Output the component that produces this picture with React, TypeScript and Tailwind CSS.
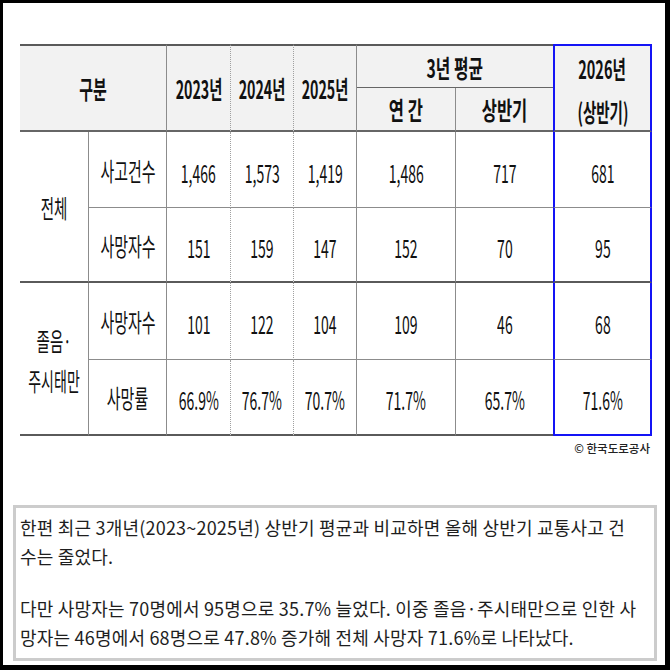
import React from "react";

const FONT = "font-['Noto_Sans_CJK_KR','Noto_Sans',sans-serif]";

function Txt({ children, cls }: { children: React.ReactNode; cls: string }) {
  return <span className={"inline-block whitespace-nowrap " + cls}>{children}</span>;
}

const colStart = ["col-start-3", "col-start-4", "col-start-5", "col-start-6", "col-start-7", "col-start-8"];
const rowStart = ["row-start-3", "row-start-4", "row-start-5", "row-start-6"];
const colRight = [
  "border-r border-r-[#a0a0a0] [border-right-style:dotted]",
  "border-r border-r-[#a0a0a0] [border-right-style:dotted]",
  "border-r border-r-[#8c8c8c]",
  "border-r border-r-[#8c8c8c]",
  "",
  "border-x-2 border-x-[#1414f5]",
];
const rowBottom = [
  "border-b border-b-[#8c8c8c]",
  "border-b-2 border-b-[#5a5a5a]",
  "border-b border-b-[#8c8c8c]",
  "border-b-2 border-b-[#5a5a5a]",
];
const rowBottomBlue = [
  "border-b border-b-[#8c8c8c]",
  "border-b-2 border-b-[#5a5a5a]",
  "border-b border-b-[#8c8c8c]",
  "border-b-2 border-b-[#1414f5]",
];

const labels = ["사고건수", "사망자수", "사망자수", "사망률"];
const data = [
  ["1,466", "1,573", "1,419", "1,486", "717", "681"],
  ["151", "159", "147", "152", "70", "95"],
  ["101", "122", "104", "109", "46", "68"],
  ["66.9%", "76.7%", "70.7%", "71.7%", "65.7%", "71.6%"],
];

const cellBase = "flex items-center justify-center";
const headBg = "bg-[#f2f2f2]";

export default function App() {
  return (
    <div className={"w-[670px] h-[670px] bg-white border-black border-l-[3px] border-t-[3px] border-r-[5px] border-b-[5px] text-[#111] " + FONT}>
      <div className="ml-[17px] mt-[41px] w-[632px]">
        <div className="grid grid-cols-[69px_78px_64px_63px_63px_99px_97px_99px] grid-rows-[44px_44px_76px_75px_77px_76px] text-[25px] leading-[30px]">
          {/* Header */}
          <div className={cellBase + " " + headBg + " col-start-1 col-span-2 row-start-1 row-span-2 border-t-2 border-t-[#5a5a5a] border-b-2 border-b-[#666] border-r border-r-[#8c8c8c] font-bold"}>
            <Txt cls="scale-x-[0.6]">구분</Txt>
          </div>
          <div className={cellBase + " " + headBg + " col-start-3 row-start-1 row-span-2 border-t-2 border-t-[#5a5a5a] border-b-2 border-b-[#666] border-r border-r-[#a0a0a0] [border-right-style:dotted] font-bold"}>
            <Txt cls="scale-x-[0.57]">2023년</Txt>
          </div>
          <div className={cellBase + " " + headBg + " col-start-4 row-start-1 row-span-2 border-t-2 border-t-[#5a5a5a] border-b-2 border-b-[#666] border-r border-r-[#a0a0a0] [border-right-style:dotted] font-bold"}>
            <Txt cls="scale-x-[0.57]">2024년</Txt>
          </div>
          <div className={cellBase + " " + headBg + " col-start-5 row-start-1 row-span-2 border-t-2 border-t-[#5a5a5a] border-b-2 border-b-[#666] border-r border-r-[#8c8c8c] font-bold"}>
            <Txt cls="scale-x-[0.57]">2025년</Txt>
          </div>
          <div className={cellBase + " " + headBg + " col-start-6 col-span-2 row-start-1 border-t-2 border-t-[#5a5a5a] border-b border-b-[#666] font-bold"}>
            <Txt cls="scale-x-[0.63]">3년 평균</Txt>
          </div>
          <div className={cellBase + " " + headBg + " col-start-6 row-start-2 border-b-2 border-b-[#666] border-r border-r-[#8c8c8c] font-bold"}>
            <Txt cls="scale-x-[0.66]">연 간</Txt>
          </div>
          <div className={cellBase + " " + headBg + " col-start-7 row-start-2 border-b-2 border-b-[#666] font-bold"}>
            <Txt cls="scale-x-[0.66]">상반기</Txt>
          </div>
          <div className={"flex flex-col items-center justify-center pt-[4px] " + headBg + " col-start-8 row-start-1 row-span-2 border-t-2 border-t-[#1414f5] border-x-2 border-x-[#1414f5] border-b-2 border-b-[#666] font-bold leading-[43px]"}>
            <Txt cls="scale-x-[0.58]">2026년</Txt>
            <Txt cls="scale-x-[0.58]">(상반기)</Txt>
          </div>

          {/* Group labels */}
          <div className={cellBase + " col-start-1 row-start-3 row-span-2 border-r border-r-[#8c8c8c] border-b-2 border-b-[#5a5a5a]"}>
            <Txt cls="scale-x-[0.58]">전체</Txt>
          </div>
          <div className={"flex flex-col items-center justify-center col-start-1 row-start-5 row-span-2 border-r border-r-[#8c8c8c] border-b-2 border-b-[#5a5a5a] leading-[40px] pt-[2px]"}>
            <Txt cls="scale-x-[0.58]">졸음·</Txt>
            <Txt cls="scale-x-[0.56]">주시태만</Txt>
          </div>

          {labels.map((l, r) => (
            <div key={"l" + r} className={cellBase + " col-start-2 " + rowStart[r] + " border-r border-r-[#8c8c8c] " + rowBottom[r]}>
              <Txt cls="scale-x-[0.6]">{l}</Txt>
            </div>
          ))}

          {data.map((row, r) =>
            row.map((v, c) => (
              <div
                key={r + "-" + c}
                className={cellBase + " pt-[4px] " + colStart[c] + " " + rowStart[r] + " " + colRight[c] + " " + (c === 5 ? rowBottomBlue[r] : rowBottom[r])}
              >
                <Txt cls="scale-x-[0.56]">{v}</Txt>
              </div>
            ))
          )}
        </div>
        <div className="mt-[4px] h-[16px] flex justify-end items-center pr-[2px] text-[11.5px] leading-[16px] text-[#222] font-medium">
          © 한국도로공사
        </div>
      </div>

      <div className="ml-[10px] mt-[49px] w-[644px] h-[156px] border-[3px] border-[#cccccc] pl-[4px] pt-[5px] text-[18px] leading-[29px] text-[#1e1e1e] tracking-[0.2px]">
        <p className="whitespace-nowrap">
          한편 최근 3개년(2023~2025년) 상반기 평균과 비교하면 올해 상반기 교통사고 건
          <br />
          수는 줄었다.
        </p>
        <p className="whitespace-nowrap mt-[23px]">
          다만 사망자는 70명에서 95명으로 35.7% 늘었다. 이중 졸음·주시태만으로 인한 사
          <br />
          망자는 46명에서 68명으로 47.8% 증가해 전체 사망자 71.6%로 나타났다.
        </p>
      </div>
    </div>
  );
}
